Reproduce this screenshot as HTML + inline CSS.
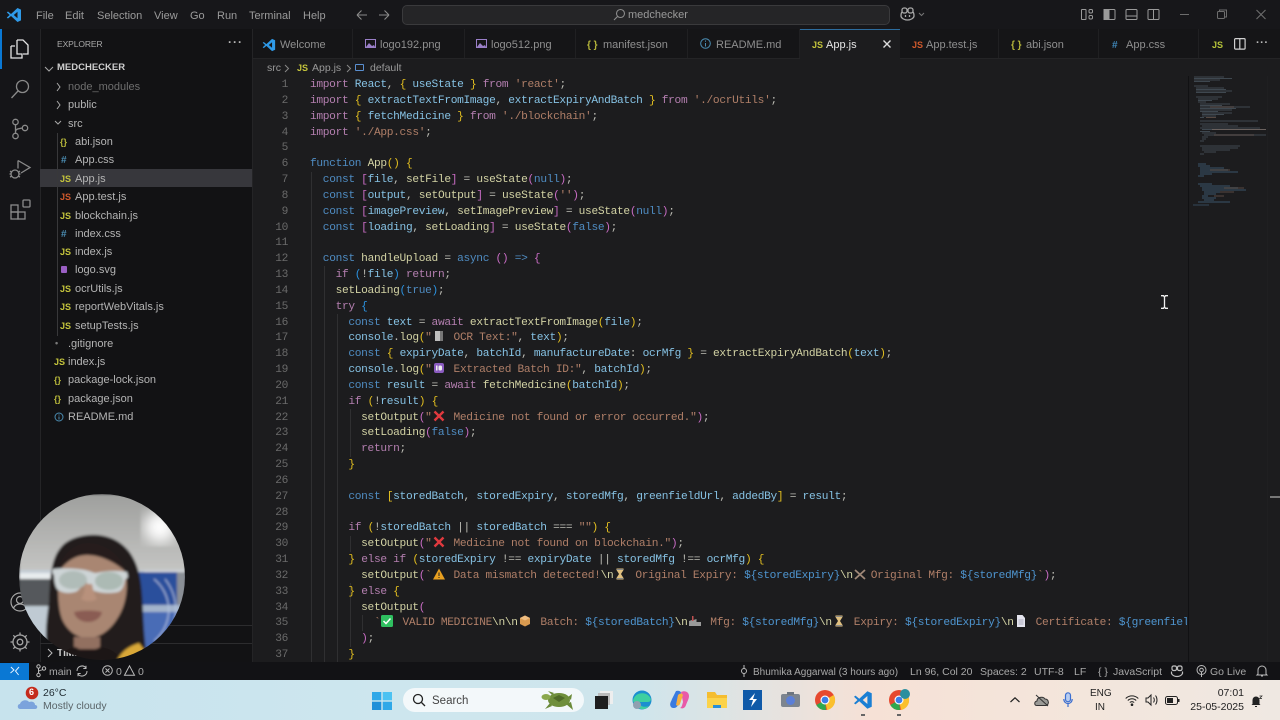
<!DOCTYPE html>
<html><head><meta charset="utf-8"><style>
html,body{margin:0;padding:0;width:1280px;height:720px;overflow:hidden;background:#1c1c1e;font-family:"Liberation Sans",sans-serif}
body{filter:blur(.3px)}
.a{position:absolute;white-space:pre}
svg{position:absolute;overflow:visible}
#code{position:absolute;left:0;top:77px;width:1187px;height:585px;overflow:hidden}
.l{position:absolute;left:310px;height:16px;line-height:16px;font:11.2px/16px "Liberation Mono",monospace;letter-spacing:-.32px;white-space:pre;color:#c8c8c0}
.n{position:absolute;width:40px;left:248px;text-align:right;font:11.2px/16px "Liberation Mono",monospace;letter-spacing:-.32px;color:#6a6a6a}
.k{color:#b47fb0}.c{color:#4f8cc2}.v{color:#86c2e4}.f{color:#d2d2a4}.s{color:#b07f68}.y{color:#e3bf20}.p{color:#c86cc4}.b{color:#2b92e0}.t{color:#bdbdb5}.r{color:#4e95d0}
.e{display:inline-block;width:22px;height:12px;position:relative;vertical-align:-2px}
.e svg{left:1px;top:0}
.g{position:absolute;width:1px;background:#2f2f31}
.tab{position:absolute;top:29px;height:29px;background:#151517;border-right:1px solid #202022}
.tt{position:absolute;top:39px;font-size:11px;line-height:13px;color:#8f8f8f;white-space:pre}
.ti{position:absolute;top:39px;font-size:9px;line-height:13px;font-weight:bold;white-space:pre}
.m{position:absolute;top:9px;font-size:11px;line-height:14px;color:#9b9b9b}
.tr{position:absolute;font-size:11px;line-height:13px;color:#b4b4b4;white-space:pre}
.ic{position:absolute;font-size:9px;line-height:13px;font-weight:bold;white-space:pre}
.st{position:absolute;top:666px;font-size:10.5px;line-height:13px;color:#a8a8a8;white-space:pre}
</style></head><body>

<!-- backgrounds -->
<div class="a" style="left:0;top:0;width:1280px;height:29px;background:#17171a"></div>
<div class="a" style="left:0;top:29px;width:40px;height:633px;background:#151518"></div>
<div class="a" style="left:40px;top:29px;width:213px;height:633px;background:#121214;border-left:1px solid #242426;box-sizing:border-box"></div>
<div class="a" style="left:253px;top:29px;width:1027px;height:29px;background:#151517"></div>
<div class="a" style="left:253px;top:58px;width:1027px;height:604px;background:#1c1c1e"></div>
<div class="a" style="left:252px;top:29px;width:1px;height:633px;background:#242426"></div>
<div class="a" style="left:1188px;top:76px;width:1px;height:586px;background:#111113"></div>
<div class="a" style="left:1267px;top:76px;width:1px;height:586px;background:#1f1f21"></div>
<div class="a" style="left:1270px;top:496px;width:10px;height:2px;background:#777"></div>

<!-- title bar -->
<svg style="left:6px;top:7px" width="16" height="16" viewBox="0 0 16 16"><path d="M11.5 1L15 2.6v10.8L11.5 15 5 9l-3 2.5L.8 10.6 3.6 8 .8 5.4 2 4.500 5 7zM11.500 4.800L7.800 8l3.700 3.200z" fill="#2f9ae8"/></svg>
<div class="m" style="left:36px">File</div><div class="m" style="left:65px">Edit</div><div class="m" style="left:97px">Selection</div><div class="m" style="left:154px">View</div><div class="m" style="left:190px">Go</div><div class="m" style="left:217px">Run</div><div class="m" style="left:249px">Terminal</div><div class="m" style="left:303px">Help</div>
<svg style="left:356px;top:9px" width="40" height="12" fill="none" stroke="#8a8a8a" stroke-width="1.100"><path d="M1 6h10M1 6l4.500-4.500M1 6l4.500 4.500M23 6h10M33 6l-4.500-4.500M33 6l-4.500 4.500"/></svg>
<div class="a" style="left:402px;top:5px;width:486px;height:18px;background:#252527;border:1px solid #3a3a3c;border-radius:5px"></div>
<svg style="left:613px;top:8px" width="13" height="13" fill="none" stroke="#8c8c8c" stroke-width="1.100"><circle cx="7.500" cy="5.500" r="4"/><path d="M4.600 8.400L1 12"/></svg>
<div class="a" style="left:628px;top:8px;font-size:11px;line-height:14px;color:#999">medchecker</div>
<svg style="left:899px;top:6px" width="30" height="16" fill="none" stroke="#a8a8a8" stroke-width="1.300"><path d="M2 10c0-2 0-3 1-4M14 6c1 1 1 2 1 4 0 2-3 4-6.500 4S2 12 2 10"/><rect x="3" y="2" width="5" height="5" rx="2"/><rect x="9" y="2" width="5" height="5" rx="2"/><path d="M6.500 9v2M10.500 9v2"/><path d="M20 7l2.500 2.500L25 7" stroke-width="1" stroke="#777"/></svg>
<svg style="left:1081px;top:8px" width="84" height="14" fill="none" stroke="#9a9a9a" stroke-width="1"><rect x=".5" y="1.500" width="4.500" height="10" rx=".5"/><rect x="8" y="1.500" width="3.500" height="3.500" rx="1.200"/><rect x="8" y="7.500" width="3.500" height="3.500" rx="1.200"/><rect x="23" y="1.500" width="11" height="10" rx="1"/><rect x="23" y="1.500" width="5" height="10" fill="#9a9a9a"/><rect x="45" y="1.500" width="11" height="10" rx="1"/><path d="M45 8h11"/><rect x="67" y="1.500" width="11" height="10" rx="1"/><path d="M72.500 1.500v10"/></svg>
<svg style="left:1178px;top:8px" width="92" height="14" fill="none" stroke="#6d6d6d" stroke-width="1"><path d="M2 6.500h9"/><rect x="39.500" y="3.500" width="7" height="7" rx="1"/><path d="M41.500 3.500v-1.500h7v7h-2"/><path d="M78.500 2l9 9M87.500 2l-9 9" stroke-width="1.100"/></svg>

<!-- activity bar -->
<div class="a" style="left:0;top:29px;width:2px;height:40px;background:#0a78d4"></div>
<svg style="left:10px;top:39px" width="20" height="21" fill="none" stroke="#e4e4e4" stroke-width="1.300"><path d="M1 7h4v-0M7 1h6l5 5v9h-5M7 1v5M1 7v12h11v-4H7V1"/></svg>
<svg style="left:10px;top:79px" width="21" height="20" fill="none" stroke="#8a8a8a" stroke-width="1.300"><circle cx="12.500" cy="7.500" r="6"/><path d="M8 12L1.500 19"/></svg>
<svg style="left:11px;top:118px" width="18" height="22" fill="none" stroke="#8a8a8a" stroke-width="1.300"><circle cx="4.500" cy="4" r="2.700"/><circle cx="4.500" cy="18" r="2.700"/><circle cx="14" cy="10" r="2.700"/><path d="M4.500 6.700v8.600M4.500 14c0-3 2-3 6.800-4"/></svg>
<svg style="left:9px;top:159px" width="22" height="22" fill="none" stroke="#8a8a8a" stroke-width="1.300"><path d="M9 1.500L21 8.500 12 14M9 1.500v8"/><circle cx="6" cy="15" r="4"/><path d="M1 12l2 1.500M1 18l2-1M11 12l-2 1.500M11 18l-2-1M.5 15H2M10 15h1.500"/></svg>
<svg style="left:10px;top:199px" width="21" height="21" fill="none" stroke="#8a8a8a" stroke-width="1.300"><rect x="1" y="6" width="7" height="7"/><rect x="1" y="13" width="7" height="7"/><rect x="8" y="13" width="7" height="7"/><rect x="13" y="1" width="7" height="7" rx="1"/></svg>
<svg style="left:10px;top:592px" width="20" height="20" fill="none" stroke="#a5a5a5" stroke-width="1.200"><circle cx="10" cy="10" r="9"/><circle cx="10" cy="8" r="3.500"/><path d="M3.500 16c1.500-3 4-4 6.500-4s5 1 6.500 4"/></svg>
<svg style="left:10px;top:632px" width="20" height="20" fill="none" stroke="#a5a5a5" stroke-width="1.300"><circle cx="10" cy="10" r="2.800"/><circle cx="10" cy="10" r="7"/><path d="M10 .5v2.500M10 17v2.500M.5 10H3M17 10h2.500M3.300 3.300l1.800 1.800M14.900 14.900l1.800 1.800M3.300 16.700l1.800-1.800M14.900 5.100l1.800-1.800"/></svg>

<!-- sidebar -->
<div class="a" style="left:57px;top:38px;font-size:8.500px;line-height:12px;color:#a8a8a8;letter-spacing:-.1px">EXPLORER</div>
<div class="a" style="left:228px;top:36px;font-size:12px;line-height:12px;color:#b5b5b5;font-weight:bold;letter-spacing:1px">···</div>
<div class="a" style="left:40px;top:169px;width:212px;height:18px;background:#37373c"></div>
<div class="a" style="left:0;top:1px;width:252px;height:640px">
<svg style="left:43px;top:62px" width="30" height="110" fill="none" stroke="#a8a8a8" stroke-width="1"><path d="M2 4l4 4 4-4M14 20l3 4-3 4M14 38l3 4-3 4M12 58l3 3 3-3"/></svg>
<div class="a" style="left:57px;top:61px;font-size:9.500px;line-height:12px;font-weight:bold;color:#cfcfcf">MEDCHECKER</div>
<div class="tr" style="left:68px;top:80px;color:#6e6e6e">node_modules</div>
<div class="tr" style="left:68px;top:98px">public</div>
<div class="tr" style="left:68px;top:117px">src</div>
<div class="a" style="left:57px;top:132px;width:1px;height:203px;background:#38383a"></div>

<div class="ic" style="left:60px;top:135px;color:#b6b63a">{}</div><div class="tr" style="left:75px;top:135px">abi.json</div>
<div class="ic" style="left:61px;top:153px;color:#4a8bb0;font-size:10px">#</div><div class="tr" style="left:75px;top:153px">App.css</div>
<div class="ic" style="left:60px;top:172px;color:#c4c43c">JS</div><div class="tr" style="left:75px;top:172px">App.js</div>
<div class="ic" style="left:60px;top:190px;color:#d0592c">JS</div><div class="tr" style="left:75px;top:190px">App.test.js</div>
<div class="ic" style="left:60px;top:209px;color:#c4c43c">JS</div><div class="tr" style="left:75px;top:209px">blockchain.js</div>
<div class="ic" style="left:61px;top:227px;color:#4a8bb0;font-size:10px">#</div><div class="tr" style="left:75px;top:227px">index.css</div>
<div class="ic" style="left:60px;top:245px;color:#c4c43c">JS</div><div class="tr" style="left:75px;top:245px">index.js</div>
<div class="a" style="left:61px;top:265px;width:6px;height:7px;background:#9a5fc4;border-radius:1px"></div><div class="tr" style="left:75px;top:263px">logo.svg</div>
<div class="ic" style="left:60px;top:282px;color:#c4c43c">JS</div><div class="tr" style="left:75px;top:282px">ocrUtils.js</div>
<div class="ic" style="left:60px;top:300px;color:#c4c43c">JS</div><div class="tr" style="left:75px;top:300px">reportWebVitals.js</div>
<div class="ic" style="left:60px;top:319px;color:#c4c43c">JS</div><div class="tr" style="left:75px;top:319px">setupTests.js</div>
<div class="ic" style="left:55px;top:336px;color:#7a7a7a">•</div><div class="tr" style="left:68px;top:337px">.gitignore</div>
<div class="ic" style="left:54px;top:355px;color:#c4c43c">JS</div><div class="tr" style="left:68px;top:355px">index.js</div>
<div class="ic" style="left:54px;top:373px;color:#b6b63a">{}</div><div class="tr" style="left:68px;top:373px">package-lock.json</div>
<div class="ic" style="left:54px;top:392px;color:#b6b63a">{}</div><div class="tr" style="left:68px;top:392px">package.json</div>
<svg style="left:54px;top:411px" width="10" height="10" fill="none" stroke="#4a8bb0" stroke-width="1"><circle cx="5" cy="5" r="4"/><path d="M5 4.500v3M5 2.500v1"/></svg><div class="tr" style="left:68px;top:410px">README.md</div>
</div>
<div class="a" style="left:40px;top:625px;width:212px;height:1px;background:#2c2c2e"></div>
<div class="a" style="left:40px;top:643px;width:212px;height:1px;background:#2c2c2e"></div>
<svg style="left:46px;top:648px" width="8" height="10" fill="none" stroke="#bbb"><path d="M2 1l4 4-4 4"/></svg>
<div class="a" style="left:57px;top:648px;font-size:10px;line-height:12px;font-weight:bold;color:#ccc">TIMELINE</div>

<!-- tabs -->
<div class="tab" style="left:254px;width:98px"></div><div class="tab" style="left:353px;width:111px"></div><div class="tab" style="left:465px;width:110px"></div><div class="tab" style="left:576px;width:111px"></div><div class="tab" style="left:688px;width:111px"></div>
<div class="a" style="left:800px;top:29px;width:100px;height:31px;background:#1c1c1e;border-top:1px solid #2c6c9e;box-sizing:border-box"></div>
<div class="tab" style="left:900px;width:98px"></div><div class="tab" style="left:999px;width:99px"></div><div class="tab" style="left:1099px;width:99px"></div>
<div class="a" style="left:253px;top:58px;width:547px;height:1px;background:#242426"></div><div class="a" style="left:900px;top:58px;width:380px;height:1px;background:#242426"></div>
<svg style="left:262px;top:38px" width="14" height="14" viewBox="0 0 16 16"><path d="M11.500 1L15 2.600v10.800L11.500 15 5 9l-3 2.500L.8 10.600 3.600 8 .8 5.400 2 4.500 5 7zM11.500 4.800L7.800 8l3.700 3.200z" fill="#2f9ae8"/></svg>
<div class="tt" style="left:280px">Welcome</div>
<svg style="left:365px;top:39px" width="11" height="10"><rect x=".5" y=".5" width="10" height="8" fill="none" stroke="#9a7fc8"/><path d="M1 8l3-4 3 3 2-1 1 2v1H1z" fill="#9a7fc8"/></svg><div class="tt" style="left:380px">logo192.png</div>
<svg style="left:476px;top:39px" width="11" height="10"><rect x=".5" y=".5" width="10" height="8" fill="none" stroke="#9a7fc8"/><path d="M1 8l3-4 3 3 2-1 1 2v1H1z" fill="#9a7fc8"/></svg><div class="tt" style="left:491px">logo512.png</div>
<div class="ti" style="left:587px;color:#b6b63a;font-size:10px">{ }</div><div class="tt" style="left:603px">manifest.json</div>
<svg style="left:700px;top:38px" width="11" height="11" fill="none" stroke="#4a8bb0" stroke-width="1"><circle cx="5.500" cy="5.500" r="4.800"/><path d="M5.500 5v3.500M5.500 2.500v1.200"/></svg><div class="tt" style="left:716px">README.md</div>
<div class="ti" style="left:812px;color:#c4c43c">JS</div><div class="tt" style="left:826px;color:#e6e6e6">App.js</div>
<svg style="left:883px;top:40px" width="8" height="9" fill="none" stroke="#ddd" stroke-width="1.400"><path d="M.5 .5l7 7M7.500 .5l-7 7"/></svg>
<div class="ti" style="left:912px;color:#d0592c">JS</div><div class="tt" style="left:926px">App.test.js</div>
<div class="ti" style="left:1011px;color:#b6b63a;font-size:10px">{ }</div><div class="tt" style="left:1026px">abi.json</div>
<div class="ti" style="left:1112px;color:#3f86b8;font-size:10px">#</div><div class="tt" style="left:1126px">App.css</div>
<div class="ti" style="left:1212px;color:#b6c43a">JS</div>
<svg style="left:1234px;top:38px" width="12" height="12" fill="none" stroke="#d0d0d0" stroke-width="1.200"><rect x=".6" y=".6" width="10.500" height="10.500" rx="1"/><path d="M5.800 .6v10.500"/></svg>
<div class="a" style="left:1256px;top:38px;font-size:11px;line-height:11px;font-weight:bold;color:#bbb;letter-spacing:.5px">···</div>

<!-- breadcrumb -->
<div class="a" style="left:267px;top:62px;font-size:10.500px;line-height:13px;color:#999">src</div>
<svg style="left:284px;top:64px" width="70" height="9" fill="none" stroke="#888"><path d="M1 1l3.500 3.500L1 8M63 1l3.500 3.500L63 8"/></svg>
<div class="a" style="left:297px;top:62px;font-size:9px;line-height:13px;font-weight:bold;color:#c4c43c">JS</div>
<div class="a" style="left:312px;top:62px;font-size:10.500px;line-height:13px;color:#999">App.js</div>
<div class="a" style="left:355px;top:64px;width:9px;height:7px;border:1px solid #5a8fd0;border-radius:1px;box-sizing:border-box;border-top-width:1px"></div>
<div class="a" style="left:370px;top:62px;font-size:10.500px;line-height:13px;color:#999">default</div>

<!-- indent guides -->
<div class="g" style="left:311px;top:172px;height:490px"></div>
<div class="g" style="left:324px;top:266px;height:396px"></div>
<div class="g" style="left:337px;top:314px;height:348px"></div>
<div class="g" style="left:350px;top:409px;height:48px"></div>
<div class="g" style="left:350px;top:536px;height:16px"></div>
<div class="g" style="left:350px;top:583px;height:64px"></div>
<div class="g" style="left:362px;top:615px;height:16px"></div>

<div id="code">
<div class="n" style="top:0">1</div><div class="l" style="top:0"><span class="k">import</span> <span class="v">React</span><span class="t">,</span> <span class="y">{</span> <span class="v">useState</span> <span class="y">}</span> <span class="k">from</span> <span class="s">'react'</span><span class="t">;</span></div>
<div class="n" style="top:15.800px">2</div><div class="l" style="top:15.800px"><span class="k">import</span> <span class="y">{</span> <span class="v">extractTextFromImage</span><span class="t">,</span> <span class="v">extractExpiryAndBatch</span> <span class="y">}</span> <span class="k">from</span> <span class="s">'./ocrUtils'</span><span class="t">;</span></div>
<div class="n" style="top:31.700px">3</div><div class="l" style="top:31.700px"><span class="k">import</span> <span class="y">{</span> <span class="v">fetchMedicine</span> <span class="y">}</span> <span class="k">from</span> <span class="s">'./blockchain'</span><span class="t">;</span></div>
<div class="n" style="top:47.500px">4</div><div class="l" style="top:47.500px"><span class="k">import</span> <span class="s">'./App.css'</span><span class="t">;</span></div>
<div class="n" style="top:63.300px">5</div>
<div class="n" style="top:79.200px">6</div><div class="l" style="top:79.200px"><span class="c">function</span> <span class="f">App</span><span class="y">()</span> <span class="y">{</span></div>
<div class="n" style="top:95px">7</div><div class="l" style="top:95px">  <span class="c">const</span> <span class="p">[</span><span class="v">file</span><span class="t">,</span> <span class="f">setFile</span><span class="p">]</span> <span class="t">=</span> <span class="f">useState</span><span class="p">(</span><span class="c">null</span><span class="p">)</span><span class="t">;</span></div>
<div class="n" style="top:110.800px">8</div><div class="l" style="top:110.800px">  <span class="c">const</span> <span class="p">[</span><span class="v">output</span><span class="t">,</span> <span class="f">setOutput</span><span class="p">]</span> <span class="t">=</span> <span class="f">useState</span><span class="p">(</span><span class="s">''</span><span class="p">)</span><span class="t">;</span></div>
<div class="n" style="top:126.700px">9</div><div class="l" style="top:126.700px">  <span class="c">const</span> <span class="p">[</span><span class="v">imagePreview</span><span class="t">,</span> <span class="f">setImagePreview</span><span class="p">]</span> <span class="t">=</span> <span class="f">useState</span><span class="p">(</span><span class="c">null</span><span class="p">)</span><span class="t">;</span></div>
<div class="n" style="top:142.500px">10</div><div class="l" style="top:142.500px">  <span class="c">const</span> <span class="p">[</span><span class="v">loading</span><span class="t">,</span> <span class="f">setLoading</span><span class="p">]</span> <span class="t">=</span> <span class="f">useState</span><span class="p">(</span><span class="c">false</span><span class="p">)</span><span class="t">;</span></div>
<div class="n" style="top:158.300px">11</div>
<div class="n" style="top:174.200px">12</div><div class="l" style="top:174.200px">  <span class="c">const</span> <span class="f">handleUpload</span> <span class="t">=</span> <span class="c">async</span> <span class="p">()</span> <span class="c">=&gt;</span> <span class="p">{</span></div>
<div class="n" style="top:190px">13</div><div class="l" style="top:190px">    <span class="k">if</span> <span class="b">(</span><span class="t">!</span><span class="v">file</span><span class="b">)</span> <span class="k">return</span><span class="t">;</span></div>
<div class="n" style="top:205.800px">14</div><div class="l" style="top:205.800px">    <span class="f">setLoading</span><span class="b">(</span><span class="c">true</span><span class="b">)</span><span class="t">;</span></div>
<div class="n" style="top:221.700px">15</div><div class="l" style="top:221.700px">    <span class="k">try</span> <span class="b">{</span></div>
<div class="n" style="top:237.500px">16</div><div class="l" style="top:237.500px">      <span class="c">const</span> <span class="v">text</span> <span class="t">=</span> <span class="k">await</span> <span class="f">extractTextFromImage</span><span class="y">(</span><span class="v">file</span><span class="y">)</span><span class="t">;</span></div>
<div class="n" style="top:253.300px">17</div><div class="l" style="top:253.300px">      <span class="v">console</span><span class="t">.</span><span class="f">log</span><span class="y">(</span><span class="s">"</span><span class="e"><svg width="12" height="12"><rect x="2" y="1" width="8" height="10" fill="#bdbdbd"/><rect x="7" y="1" width="3" height="10" fill="#777"/></svg></span><span class="s">OCR Text:"</span><span class="t">,</span> <span class="v">text</span><span class="y">)</span><span class="t">;</span></div>
<div class="n" style="top:269.200px">18</div><div class="l" style="top:269.200px">      <span class="c">const</span> <span class="y">{</span> <span class="v">expiryDate</span><span class="t">,</span> <span class="v">batchId</span><span class="t">,</span> <span class="v">manufactureDate</span><span class="t">:</span> <span class="v">ocrMfg</span> <span class="y">}</span> <span class="t">=</span> <span class="f">extractExpiryAndBatch</span><span class="y">(</span><span class="v">text</span><span class="y">)</span><span class="t">;</span></div>
<div class="n" style="top:285px">19</div><div class="l" style="top:285px">      <span class="v">console</span><span class="t">.</span><span class="f">log</span><span class="y">(</span><span class="s">"</span><span class="e"><svg width="12" height="12"><rect x="1" y="1" width="10" height="10" rx="2" fill="#8a5bc0"/><rect x="3" y="3.500" width="1.500" height="5" fill="#eee"/><rect x="5.500" y="3.500" width="3.500" height="5" rx="1.500" fill="#eee"/></svg></span><span class="s">Extracted Batch ID:"</span><span class="t">,</span> <span class="v">batchId</span><span class="y">)</span><span class="t">;</span></div>
<div class="n" style="top:300.800px">20</div><div class="l" style="top:300.800px">      <span class="c">const</span> <span class="v">result</span> <span class="t">=</span> <span class="k">await</span> <span class="f">fetchMedicine</span><span class="y">(</span><span class="v">batchId</span><span class="y">)</span><span class="t">;</span></div>
<div class="n" style="top:316.700px">21</div><div class="l" style="top:316.700px">      <span class="k">if</span> <span class="y">(</span><span class="t">!</span><span class="v">result</span><span class="y">)</span> <span class="y">{</span></div>
<div class="n" style="top:332.500px">22</div><div class="l" style="top:332.500px">        <span class="f">setOutput</span><span class="p">(</span><span class="s">"</span><span class="e"><svg width="12" height="12" fill="none" stroke="#e0393e" stroke-width="2.400"><path d="M1.500 1.500l9 9M10.500 1.500l-9 9"/></svg></span><span class="s">Medicine not found or error occurred."</span><span class="p">)</span><span class="t">;</span></div>
<div class="n" style="top:348.300px">23</div><div class="l" style="top:348.300px">        <span class="f">setLoading</span><span class="p">(</span><span class="c">false</span><span class="p">)</span><span class="t">;</span></div>
<div class="n" style="top:364.200px">24</div><div class="l" style="top:364.200px">        <span class="k">return</span><span class="t">;</span></div>
<div class="n" style="top:380px">25</div><div class="l" style="top:380px">      <span class="y">}</span></div>
<div class="n" style="top:395.800px">26</div>
<div class="n" style="top:411.700px">27</div><div class="l" style="top:411.700px">      <span class="c">const</span> <span class="y">[</span><span class="v">storedBatch</span><span class="t">,</span> <span class="v">storedExpiry</span><span class="t">,</span> <span class="v">storedMfg</span><span class="t">,</span> <span class="v">greenfieldUrl</span><span class="t">,</span> <span class="v">addedBy</span><span class="y">]</span> <span class="t">=</span> <span class="v">result</span><span class="t">;</span></div>
<div class="n" style="top:427.500px">28</div>
<div class="n" style="top:443.300px">29</div><div class="l" style="top:443.300px">      <span class="k">if</span> <span class="y">(</span><span class="t">!</span><span class="v">storedBatch</span> <span class="t">||</span> <span class="v">storedBatch</span> <span class="t">===</span> <span class="s">""</span><span class="y">)</span> <span class="y">{</span></div>
<div class="n" style="top:459.200px">30</div><div class="l" style="top:459.200px">        <span class="f">setOutput</span><span class="p">(</span><span class="s">"</span><span class="e"><svg width="12" height="12" fill="none" stroke="#e0393e" stroke-width="2.400"><path d="M1.500 1.500l9 9M10.500 1.500l-9 9"/></svg></span><span class="s">Medicine not found on blockchain."</span><span class="p">)</span><span class="t">;</span></div>
<div class="n" style="top:475px">31</div><div class="l" style="top:475px">      <span class="y">}</span> <span class="k">else if</span> <span class="y">(</span><span class="v">storedExpiry</span> <span class="t">!==</span> <span class="v">expiryDate</span> <span class="t">||</span> <span class="v">storedMfg</span> <span class="t">!==</span> <span class="v">ocrMfg</span><span class="y">)</span> <span class="y">{</span></div>
<div class="n" style="top:490.800px">32</div><div class="l" style="top:490.800px">        <span class="f">setOutput</span><span class="p">(</span><span class="s">`</span><span class="e"><svg width="12" height="12"><path d="M6 .5L12 11.500H0z" fill="#e8a020"/><path d="M6 4.500v3.500M6 9v1" stroke="#222"/></svg></span><span class="s">Data mismatch detected!</span><span class="f">\n</span><span class="e"><svg width="12" height="12"><path d="M2.500 .5h7v1.500L7 6l2.500 4v1.500h-7V10L5 6 2.500 2z" fill="#e0c080"/><path d="M3 1h6v1H3zM3 10h6v1H3z" fill="#8a8a8a"/></svg></span><span class="s">Original Expiry: </span><span class="r">${storedExpiry}</span><span class="f">\n</span><span class="e" style="width:18px"><svg width="12" height="12" fill="none" stroke="#a08878" stroke-width="1.800"><path d="M1 11L11 2M1 2l10 9"/></svg></span><span class="s">Original Mfg: </span><span class="r">${storedMfg}</span><span class="s">`</span><span class="p">)</span><span class="t">;</span></div>
<div class="n" style="top:506.700px">33</div><div class="l" style="top:506.700px">      <span class="y">}</span> <span class="k">else</span> <span class="y">{</span></div>
<div class="n" style="top:522.500px">34</div><div class="l" style="top:522.500px">        <span class="f">setOutput</span><span class="p">(</span></div>
<div class="n" style="top:538.300px">35</div><div class="l" style="top:538.300px">          <span class="s">`</span><span class="e" style="width:22.200px"><svg width="12" height="12"><rect x="0" y="0" width="12" height="12" rx="1.500" fill="#2fbf60"/><path d="M2.500 6l2.500 2.500L9.500 3.500" fill="none" stroke="#fff" stroke-width="1.500"/></svg></span><span class="s">VALID MEDICINE</span><span class="f">\n\n</span><span class="e" style="width:22.800px"><svg width="12" height="12"><path d="M6 .5l5 2.500v6l-5 2.500-5-2.500V3z" fill="#d99a50"/><path d="M6 5.500l5-2.500-5-2.500-5 2.500z" fill="#eebc80"/></svg></span><span class="s">Batch: </span><span class="r">${storedBatch}</span><span class="f">\n</span><span class="e" style="width:22.800px"><svg width="12" height="12"><path d="M0 11V6l3-1V1h1.500v4l3-1v3h4.500v4z" fill="#9a9a9a"/><rect x="3" y="1" width="1.500" height="5" fill="#c05050"/></svg></span><span class="s">Mfg: </span><span class="r">${storedMfg}</span><span class="f">\n</span><span class="e"><svg width="12" height="12"><path d="M2.500 .5h7v1.500L7 6l2.500 4v1.500h-7V10L5 6 2.500 2z" fill="#e0c080"/><path d="M3 1h6v1H3zM3 10h6v1H3z" fill="#8a8a8a"/></svg></span><span class="s">Expiry: </span><span class="r">${storedExpiry}</span><span class="f">\n</span><span class="e"><svg width="12" height="12"><path d="M2 0h5.500L10 3v9H2z" fill="#e4e4ee"/><path d="M3.500 5h5M3.500 7h5M3.500 9h5" stroke="#9a9ab0" stroke-width=".7"/></svg></span><span class="s">Certificate: </span><span class="r">${greenfieldUrl}</span></div>
<div class="n" style="top:554.200px">36</div><div class="l" style="top:554.200px">        <span class="p">)</span><span class="t">;</span></div>
<div class="n" style="top:570px">37</div><div class="l" style="top:570px">      <span class="y">}</span></div>
</div>

<!-- minimap -->
<svg style="left:1190px;top:74px" width="80" height="135" fill="none" stroke-width=".8">
<path stroke="#6a7f90" opacity=".6" d="M4 3h30M4 4.500h38M4 6h26M4 7.500h16M4 12h14M6 14h28M6 15.500h30M6 17h36M6 18.500h30M6 23h26M8 25h20M8 26.500h14M8 28h8M10 30h30M10 31.500h22M10 33h50M10 34.500h36M10 36h32M10 37.500h18M12 39h30M12 40.500h22M12 42h14M10 43.500h4M10 47h58M10 50h28M12 52h36M10 54h60M12 55.500h64M10 57.500h10M12 59h14M14 61h62M12 63h6M12 65h4M10 67h4M10 72h40M12 74h36M12 76h28M14 78h12M10 80h4"/>
<path stroke="#5a8fb8" opacity=".65" d="M8 90h8M8 92h12M10 94h24M10 96h28M10 98h38M10 100h12M8 102h6M8 110h14M10 112h30M12 114h36M12 116h44M14 118h16M14 120h12M12 122h6M12 124h14M14 126h10M8 128h32"/>
<path stroke="#a08070" opacity=".6" d="M20 33h24M22 55.500h54M24 61h40M16 43.500h10M34 114h20M30 118h14M24 122h10M20 96h20"/>
<path stroke="#5a8fb8" opacity=".5" d="M3 131h16"/>
</svg>

<!-- cursor -->
<svg style="left:1160px;top:295px" width="9" height="14" fill="none" stroke="#f0f0f0" stroke-width="1.300"><path d="M1 .7h2.500L4.500 2l1-1.300H8M4.500 2v10M1 13.300h2.500l1-1.300 1 1.300H8"/></svg>

<!-- status bar -->
<div class="a" style="left:0;top:662px;width:1280px;height:18px;background:#121215"></div>
<div class="a" style="left:0;top:663px;width:29px;height:17px;background:#0a78d4"></div>
<svg style="left:10px;top:666px" width="10" height="10" fill="none" stroke="#e6f2ff" stroke-width="1"><path d="M.5 7L4 4 .9 1M9 1L5.500 5 8.600 9"/></svg>
<svg style="left:36px;top:664px" width="10" height="14" fill="none" stroke="#bbb"><circle cx="2.500" cy="2.500" r="1.700"/><circle cx="2.500" cy="11" r="1.700"/><circle cx="8" cy="4.500" r="1.700"/><path d="M2.500 4v5.500M2.500 8c0-2 3-1.500 4.500-2.500"/></svg>
<div class="st" style="left:49px">main</div>
<svg style="left:76px;top:665px" width="12" height="12" fill="none" stroke="#bbb" stroke-width="1"><path d="M1 6a5 5 0 0 1 9-3M11 6a5 5 0 0 1-9 3M10 .8v2.700H7.300M2 11.200V8.500h2.700"/></svg>
<svg style="left:102px;top:665px" width="11" height="11" fill="none" stroke="#bbb"><circle cx="5.500" cy="5.500" r="4.800"/><path d="M3.500 3.500l4 4M7.500 3.500l-4 4"/></svg>
<div class="st" style="left:116px">0</div>
<svg style="left:124px;top:665px" width="11" height="11" fill="none" stroke="#bbb"><path d="M5.500 .8l5 9.500h-10z"/></svg>
<div class="st" style="left:138px">0</div>
<svg style="left:740px;top:665px" width="8" height="12" fill="none" stroke="#bbb"><circle cx="4" cy="6" r="2.500"/><path d="M4 0v3.500M4 8.500V12"/></svg>
<div class="st" style="left:753px;font-size:10px">Bhumika Aggarwal (3 hours ago)</div>
<div class="st" style="left:910px">Ln 96, Col 20</div>
<div class="st" style="left:980px">Spaces: 2</div>
<div class="st" style="left:1034px">UTF-8</div>
<div class="st" style="left:1074px">LF</div>
<div class="st" style="left:1098px">{ }</div>
<div class="st" style="left:1113px">JavaScript</div>
<svg style="left:1170px;top:665px" width="14" height="12" fill="none" stroke="#c0c0c0" stroke-width="1.200"><path d="M1.500 6.500v2c1 2 3 3 5.500 3s4.500-1 5.500-3v-2"/><rect x="2" y="1" width="4.500" height="4.500" rx="1.500"/><rect x="7.500" y="1" width="4.500" height="4.500" rx="1.500"/></svg>
<svg style="left:1196px;top:665px" width="11" height="12" fill="none" stroke="#bbb"><circle cx="5.500" cy="5" r="4.500"/><circle cx="5.500" cy="5" r="1.800"/><path d="M5.500 7v5"/></svg>
<div class="st" style="left:1210px">Go Live</div>
<svg style="left:1256px;top:665px" width="12" height="12" fill="none" stroke="#bbb"><path d="M2 9V5a4 4 0 0 1 8 0v4l1 1H1zM5 11h2"/></svg>

<!-- taskbar -->
<div class="a" style="left:0;top:680px;width:1280px;height:40px;background:linear-gradient(90deg,#c7e3ed 0%,#cde6ee 30%,#cfe5ec 50%,#f6e1d6 68%,#f3e6dc 85%,#efe8e2 100%)"></div>
<svg style="left:16px;top:684px" width="26" height="32"><path d="M4 25c-3 0-3-5 0-5 1-4 7-5 9-2 3-1 6 0 6 3 3 0 3 4 0 4z" fill="#7ba3dc"/><circle cx="16" cy="9" r="6.300" fill="#c42b1c"/></svg>
<div class="a" style="left:29px;top:686px;font-size:9px;line-height:13px;color:#fff;font-weight:bold">6</div>
<div class="a" style="left:43px;top:687px;font-size:10.500px;line-height:13px;color:#1f2a30">26°C</div>
<div class="a" style="left:43px;top:700px;font-size:10.500px;line-height:13px;color:#5a6468">Mostly cloudy</div>

<!-- start -->
<svg style="left:372px;top:691px" width="20" height="19"><path d="M0 1h9.300v8.300H0z" fill="#2fa8e8"/><path d="M10.700 1H20v8.300h-9.300z" fill="#4cc2f2"/><path d="M0 10.700h9.300V19H0z" fill="#1f8fd8"/><path d="M10.700 10.700H20V19h-9.300z" fill="#2fa8e8"/></svg>
<div class="a" style="left:403px;top:688px;width:181px;height:24px;border-radius:12px;background:#f3f8fa"></div>
<svg style="left:412px;top:693px" width="14" height="14" fill="none" stroke="#222" stroke-width="1.300"><circle cx="6" cy="6" r="4.500"/><path d="M9.500 9.500L13 13"/></svg>
<div class="a" style="left:432px;top:694px;font-size:11.500px;line-height:14px;color:#444">Search</div>
<svg style="left:540px;top:689px" width="38" height="22"><ellipse cx="19" cy="11" rx="11" ry="7" fill="#6f8f3c"/><ellipse cx="6" cy="8" rx="4.500" ry="3" fill="#8aa84c"/><path d="M10 14L5 20l7-3zM26 15l7 6-2-8zM12 6L8 2l6 2zM28 8l4-3-1 6z" fill="#6a8a38"/><path d="M13 9l6-3 6 3-6 4z" fill="#4f6a28"/></svg>
<svg style="left:595px;top:691px" width="18" height="18"><rect x="5" y="0" width="13" height="13" fill="#eee"/><rect x="3" y="2" width="12" height="12" fill="#bbb"/><rect x="0" y="5" width="13" height="13" fill="#1e1e1e"/></svg>
<svg style="left:632px;top:690px" width="20" height="20"><circle cx="10" cy="10" r="9.500" fill="#1c8fd0"/><path d="M1 11C2 3 12 1 17 6c3 3 2 6-1 6H7c0 4 5 6 10 4-3 4-9 4-12 1" fill="#3ecfa0"/><circle cx="5" cy="15" r="4" fill="#8fa0b0"/></svg>
<svg style="left:670px;top:690px" width="20" height="20"><path d="M6 1c4-1 6 1 5 5l-3 9c-1 3-5 4-7 2-2-3 0-5 1-8z" fill="#3a7be0"/><path d="M11 2c4-2 8 0 8 4 0 3-2 6-3 9-1 3-3 4-6 3 2-1 2-3 3-6z" fill="#e85aa8"/><path d="M8 5c2-2 4-2 5 0l-3 9c-1 2-3 2-4 1z" fill="#f8b040"/></svg>
<svg style="left:707px;top:691px" width="20" height="18"><path d="M0 1h8l2 3h10v13H0z" fill="#f5bd30"/><rect x="0" y="7" width="20" height="10" fill="#fcd34a"/><rect x="6" y="14" width="8" height="3" fill="#2a8fd8"/></svg>
<svg style="left:743px;top:690px" width="19" height="20"><rect width="19" height="20" fill="#0f5aa8"/><path d="M12 3L6 10h4l-2 7 6-8h-4z" fill="#fff"/></svg>
<svg style="left:781px;top:691px" width="19" height="17"><rect x="0" y="3" width="19" height="13" rx="2" fill="#7d8590"/><rect x="6" y="1" width="7" height="3" fill="#6d7580"/><circle cx="9.500" cy="9.500" r="4.500" fill="#5b7fd8"/></svg>
<svg style="left:815px;top:690px" width="20" height="20"><circle cx="10" cy="10" r="10" fill="#e6492f"/><path d="M10 10L1.300 15A10 10 0 0 0 10 20h1z" fill="#2fa84f"/><path d="M10 10l8.700-5A10 10 0 0 1 12 20z" fill="#fbc02d"/><circle cx="10" cy="10" r="4.500" fill="#fff"/><circle cx="10" cy="10" r="3.400" fill="#3b7de8"/></svg>
<svg style="left:853px;top:690px" width="20" height="20" viewBox="0 0 16 16"><path d="M11.500 1L15 2.600v10.800L11.500 15 5 9l-3 2.500L.8 10.600 3.600 8 .8 5.400 2 4.500 5 7zM11.500 4.800L7.800 8l3.700 3.200z" fill="#1a7fd4"/></svg>
<svg style="left:889px;top:690px" width="20" height="20"><circle cx="10" cy="10" r="10" fill="#e6492f"/><path d="M10 10L1.300 15A10 10 0 0 0 10 20h1z" fill="#2fa84f"/><path d="M10 10l8.700-5A10 10 0 0 1 12 20z" fill="#fbc02d"/><circle cx="10" cy="10" r="4.500" fill="#fff"/><circle cx="10" cy="10" r="3.400" fill="#3b7de8"/><circle cx="16" cy="4" r="5" fill="#2a8f9f"/></svg>
<div class="a" style="left:861px;top:714px;width:4px;height:2px;background:#666"></div>
<div class="a" style="left:897px;top:714px;width:4px;height:2px;background:#666"></div>

<!-- tray -->
<svg style="left:1010px;top:697px" width="10" height="6" fill="none" stroke="#222" stroke-width="1.200"><path d="M.5 5L5 .8 9.500 5"/></svg>
<svg style="left:1034px;top:694px" width="16" height="13"><path d="M3 11.500c-3 0-3-4 0-4.500 0-4 6-5 8-2 3 0 4 3 3 5-.5 1-1 1.500-2 1.500z" fill="#9a9a96" stroke="#333"/><path d="M2 1l12 11" stroke="#333"/></svg>
<svg style="left:1063px;top:692px" width="10" height="16" fill="none" stroke="#3a6ed0" stroke-width="1.200"><rect x="2.500" y=".8" width="5" height="9" rx="2.500" fill="#b8cdf0"/><path d="M.8 7c0 6 8.400 6 8.400 0M5 12v3"/></svg>
<div class="a" style="left:1090px;top:688px;width:20px;text-align:center;font-size:10px;line-height:12px;color:#222">ENG</div>
<div class="a" style="left:1090px;top:702px;width:20px;text-align:center;font-size:10px;line-height:12px;color:#222">IN</div>
<svg style="left:1125px;top:695px" width="14" height="11" fill="none" stroke="#222"><path d="M.7 3.500c3.500-3.500 9-3.500 12.600 0M2.800 5.500c2.500-2.300 6-2.300 8.400 0M4.800 7.500c1.300-1 3-1 4.400 0"/><circle cx="7" cy="9.700" r=".8" fill="#222"/></svg>
<svg style="left:1145px;top:694px" width="14" height="12" fill="none" stroke="#222"><path d="M1 4h2l3-3v10L3 8H1zM8.500 3.500c1 1.500 1 3.500 0 5M10.500 1.500c2 2.500 2 6.500 0 9"/></svg>
<svg style="left:1165px;top:696px" width="15" height="9"><rect x=".5" y=".5" width="12" height="8" rx="2" fill="none" stroke="#222"/><rect x="2" y="2" width="6" height="5" fill="#222"/><rect x="13" y="3" width="1.500" height="3" fill="#222"/></svg>
<div class="a" style="left:1184px;top:687px;width:60px;text-align:right;font-size:10.500px;line-height:13px;color:#222">07:01</div>
<div class="a" style="left:1184px;top:700px;width:60px;text-align:right;font-size:10.500px;line-height:14px;color:#222">25-05-2025</div>
<svg style="left:1251px;top:695px" width="12" height="12"><path d="M1.500 9V5a3.500 3.500 0 0 1 7 0v4l1 1h-9zM4 11h2v1H4z" fill="#222"/><path d="M8.500 1h2.500L8.500 3.500H11" stroke="#222" fill="none" stroke-width=".7"/></svg>

<!-- webcam -->
<svg style="left:19px;top:494px" width="167" height="167" viewBox="0 0 167 167">
<defs>
<clipPath id="cc"><circle cx="83" cy="83" r="83"/></clipPath>
<linearGradient id="wall" x1="0" y1="0" x2="0" y2="1"><stop offset="0" stop-color="#9e9f9d"/><stop offset=".5" stop-color="#c8c8c6"/></linearGradient>
<filter id="bl"><feGaussianBlur stdDeviation="1.200"/></filter>
<filter id="bl2"><feGaussianBlur stdDeviation="7"/></filter>
</defs>
<g clip-path="url(#cc)"><g filter="url(#bl)">
<rect width="167" height="167" fill="url(#wall)"/>
<circle cx="141" cy="33" r="16" fill="#fff" filter="url(#bl2)"/>
<rect x="0" y="76" width="167" height="91" fill="#c4ced6"/>
<rect x="0" y="79" width="40" height="6" fill="#e8ecee"/>
<rect x="125" y="77" width="42" height="7" fill="#e4e6e6"/>
<rect x="0" y="85" width="40" height="27" fill="#54585c"/>
<rect x="0" y="112" width="40" height="55" fill="#bfcad3"/>
<rect x="118" y="78" width="40" height="33" fill="#2c4f9c"/>
<rect x="158" y="78" width="9" height="33" fill="#8a8f96"/>
<rect x="118" y="111" width="49" height="7" fill="#a3b4cc"/>
<rect x="118" y="118" width="49" height="49" fill="#4a6cb6"/>
<path d="M135 85a40 40 0 0 1 0 62M146 85a50 50 0 0 1 0 62" stroke="#b8c8e6" fill="none" stroke-width="1"/>
<path d="M30 166c-5-20-3-38 0-58 1-30 3-45 13-56 8-9 24-12 36-11 20 2 35 14 41 38 5 20 3 50 8 87z" fill="#241c1c"/>
<path d="M39 84c0-16 12-28 30-29 18-1 35 10 38 28 2 15-1 30-9 42-7 11-17 19-29 19-12 0-21-8-26-19-4-11-4-26-4-41z" fill="#a98672"/>
<path d="M38 80c2-14 14-31 31-31s33 12 39 30c-10-10-26-18-40-18-12 0-22 7-30 19z" fill="#261d1d"/>
<path d="M55 143h26v12H55z" fill="#927060"/>
<path d="M38 167c2-7 10-13 19-14 4 4 18 4 24 0 10 1 18 6 22 14z" fill="#1f1818"/>
<path d="M98 167c3-8 10-14 22-18l14 18z" fill="#d9a838"/>
<path d="M34 75c10-1 26-1 36 2 3 1 5 2 7 2 10-2 20-3 31-1l1 5-3 3c-1 6-3 11-7 12-8 2-20 1-26-2-3-2-5-6-6-10h-3c-1 6-4 11-8 12-7 2-14 1-18-3-2-3-3-9-3-14-2-1-2-5-1-6z" fill="#cdd4d6"/>
<ellipse cx="54" cy="86" rx="14" ry="9" fill="#b0bcb8"/><ellipse cx="90" cy="87" rx="14" ry="9" fill="#acbab4"/>
<path d="M55 118c8-2 20-2 28 0-1 6-7 10-14 10s-13-4-14-10z" fill="#8a5c52"/>
<path d="M66 90c0 5-1 10-4 15 5 3 11 3 16 0-3-5-4-10-5-15z" fill="#b8917b"/>
</g></g></svg>

</body></html>
